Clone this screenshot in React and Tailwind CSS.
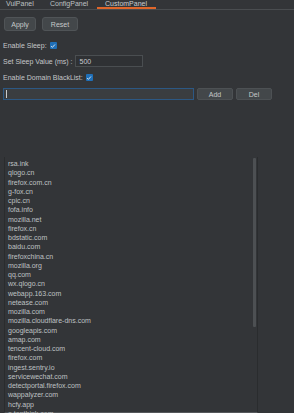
import React from 'react';

const domains = [
  'rsa.ink', 'qlogo.cn', 'firefox.com.cn', 'g-fox.cn', 'cpic.cn', 'fofa.info', 'mozilla.net',
  'firefox.cn', 'bdstatic.com', 'baidu.com', 'firefoxchina.cn', 'mozilla.org', 'qq.com',
  'wx.qlogo.cn', 'webapp.163.com', 'netease.com', 'mozilla.com', 'mozilla.cloudflare-dns.com',
  'googleapis.com', 'amap.com', 'tencent-cloud.com', 'firefox.com', 'ingest.sentry.io',
  'servicewechat.com', 'detectportal.firefox.com', 'wappalyzer.com', 'hcfy.app', 'e.topthink.com',
];

function Check() {
  return (
    <span className="inline-flex h-[7px] w-[7px] items-center justify-center rounded-[1px] bg-[#1f6fb8]">
      <svg viewBox="0 0 8 8" className="h-[6px] w-[6px]">
        <path d="M1.5 4.2 L3.2 5.8 L6.6 2" fill="none" stroke="#e8eef5" strokeWidth="1.2" />
      </svg>
    </span>
  );
}

function Btn({ children, w }) {
  return (
    <button className={`flex h-[12px] items-center justify-center rounded-[2px] border border-[#4d5154] bg-[#43474a] text-[7px] leading-none text-[#c5c7c9] ${w}`}>
      {children}
    </button>
  );
}

export default function App() {
  return (
    <div className="h-[413px] w-[294px] overflow-hidden bg-[#333538] font-['Liberation_Sans',Arial,sans-serif] text-[7px] text-[#c4c6c8]">
      <div className="flex h-[10px] items-end border-b border-[#4a4d50]">
        <div className="flex h-[10px] items-start leading-none">
          <div className="w-[47px] pl-[6px] pt-[1px] text-[#bfc1c3]">VulPanel</div>
          <div className="w-[50px] pl-[3px] pt-[1px] text-[#bfc1c3]">ConfigPanel</div>
          <div className="-mb-[1px] w-[59px] border-b-2 border-[#e0662a] pl-[8px] pt-[1px] text-[#c9cbcd]">CustomPanel</div>
        </div>
      </div>

      <div className="flex gap-[6px] px-[4px] pt-[7px]">
        <button className="flex h-[14px] w-[32px] items-center justify-center rounded-[3px] border border-[#505457] bg-[#43474a] text-[7px] leading-none text-[#c5c7c9]">Apply</button>
        <button className="flex h-[14px] w-[36px] items-center justify-center rounded-[3px] border border-[#505457] bg-[#43474a] text-[7px] leading-none text-[#c5c7c9]">Reset</button>
      </div>

      <div className="flex items-center gap-[3px] px-[3px] pt-[11px] leading-none">
        <span>Enable Sleep:</span>
        <Check />
      </div>

      <div className="flex items-center gap-[2px] px-[3px] pt-[6px] leading-none">
        <span>Set Sleep Value (ms) :</span>
        <div className="flex h-[12px] w-[68px] items-center border border-[#4a4e51] bg-[#2f3134] pl-[4px] text-[#c9cbcd]">500</div>
      </div>

      <div className="flex items-center gap-[3px] px-[3px] pt-[7px] leading-none">
        <span>Enable Domain BlackList:</span>
        <Check />
      </div>

      <div className="flex items-center gap-[3px] px-[3px] pt-[7px]">
        <div className="flex h-[12px] w-[191px] items-center border border-[#2c5884] bg-[#3a3d40] pl-[2px]">
          <span className="h-[8px] w-px bg-[#c9cbcd]" />
        </div>
        <Btn w="w-[36px]">Add</Btn>
        <Btn w="w-[36px]">Del</Btn>
      </div>

      <div className="ml-[4px] mt-[57px] flex h-[256px] w-[254px] border-b border-l border-r border-[#2a2c2e] border-b-[#55585b]">
        <div className="flex-1 pl-[3px] pt-[2px] leading-[9.25px] text-[#bfc1c3]">
          {domains.map((d) => (
            <div key={d}>{d}</div>
          ))}
        </div>
        <div className="mr-[1px] mt-[1px] h-[169px] w-[3px] rounded-[1px] bg-[#4d5053]" />
      </div>
    </div>
  );
}
